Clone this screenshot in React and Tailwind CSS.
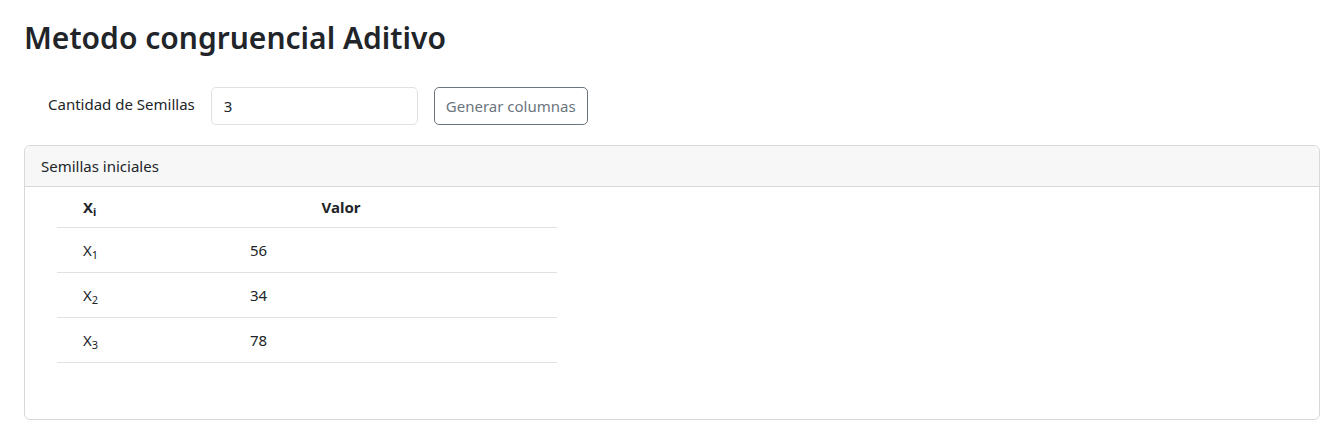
export default function App() {
  const rows = [
    { i: 1, v: 56 },
    { i: 2, v: 34 },
    { i: 3, v: 78 },
  ];

  return (
    <div className="min-h-screen bg-white pl-6 pr-[18px] pt-[18px] text-[#212529]" style={{ fontFamily: '"Noto Sans", "Open Sans", sans-serif' }}>
      <h1 className="text-[30px] font-semibold leading-[40px]">Metodo congruencial Aditivo</h1>

      <div className="mt-[29px] flex items-start">
        <label className="ml-6 mt-[6px] text-[15px] leading-[22px]">Cantidad de Semillas</label>
        <input
          type="text"
          defaultValue="3"
          className="ml-4 h-[38px] w-[207px] rounded-[5px] border border-[#dee2e6] px-3 text-[15px] outline-none"
        />
        <button className="ml-4 h-[38px] w-[154px] rounded-[5px] border border-[#6c757d] text-[15px] text-[#6c757d]">
          Generar columnas
        </button>
      </div>

      <div className="mt-5 h-[275px] rounded-[6px] border border-[#d9d9d9]">
        <div className="flex h-[41px] items-center rounded-t-[6px] border-b border-[#d9d9d9] bg-[#f7f7f7] px-4 text-[15px]">
          Semillas iniciales
        </div>
        <div className="ml-8 w-[500px] text-[15px]">
          <div className="flex h-[41px] items-center border-b border-[#dee2e6] font-bold">
            <div className="w-[176px] pl-[26px]">
              X<sub className="text-[11px]">i</sub>
            </div>
            <div className="w-[216px] text-center">Valor</div>
          </div>
          {rows.map((r) => (
            <div key={r.i} className="flex h-[45px] items-center border-b border-[#dee2e6]">
              <div className="w-[193px] pl-[26px]">
                X<sub className="text-[11px]">{r.i}</sub>
              </div>
              <div>{r.v}</div>
            </div>
          ))}
        </div>
      </div>
    </div>
  );
}
